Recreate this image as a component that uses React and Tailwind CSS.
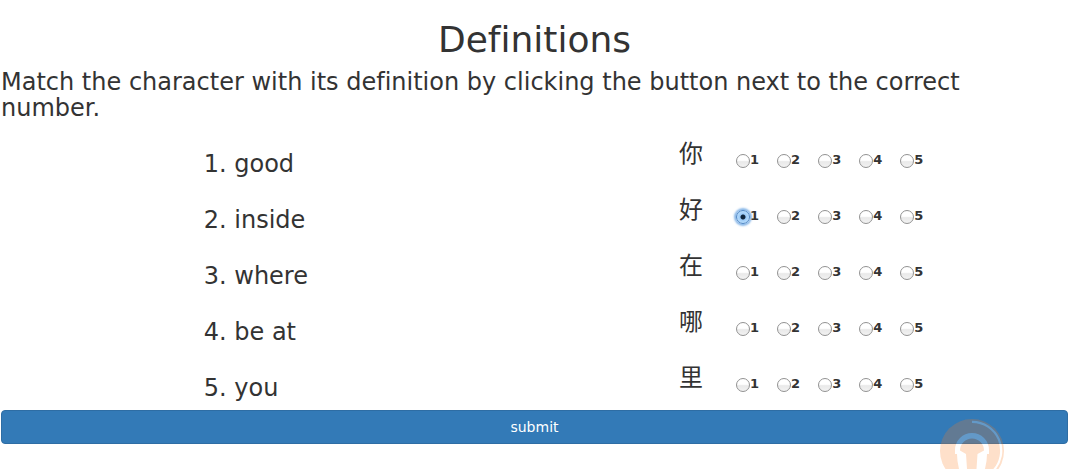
import { useState } from "react";

const rows = [
  { definition: "good", character: "你" },
  { definition: "inside", character: "好" },
  { definition: "where", character: "在" },
  { definition: "be at", character: "哪" },
  { definition: "you", character: "里" },
];

const choices = [1, 2, 3, 4, 5];

function Choice({ row, value, checked, onSelect }) {
  return (
    <label className="flex items-center text-[13px] leading-5 font-bold">
      <input
        type="radio"
        name={`character-${row}`}
        value={value}
        checked={checked}
        onChange={onSelect}
        className="mt-px size-3.5 shrink-0 appearance-none rounded-full border border-[#929292] bg-linear-to-b from-white from-45% via-[#e9e9e9] via-55% to-[#f4f4f4] bg-origin-border checked:border-[#4c86c6] checked:bg-[radial-gradient(circle,#10263d_0_2px,#9bcaf8_3px,#b9ddfb_6px)] checked:shadow-[0_0_2px_2px_#8ab8e8]"
      />
      {value}
    </label>
  );
}

function HeadphonesMark() {
  return (
    <div className="pointer-events-none fixed right-[73px] bottom-0 h-[50px] w-16 overflow-hidden">
      <svg viewBox="0 0 64 64" className="size-16 opacity-24" aria-hidden="true">
        <circle cx="32" cy="32" r="32" fill="#fb7d22" />
        <path d="M32 2.8A29 29 0 0 1 53 52" fill="none" stroke="#ffffff" strokeWidth="2.2" />
        <path
          d="M15 35V31A17 17 0 0 1 49 31V35H47Q47 42 45 50H36.5L37.5 35L44 31.5A12 12 0 0 0 20 31.5L26 35L27 50H19Q17 42 17 35Z"
          fill="#ffffff"
        />
      </svg>
    </div>
  );
}

export default function App() {
  const [answers, setAnswers] = useState({ 1: 1 });

  return (
    <main className="bg-white pt-[21px] pr-[9px] pl-px font-['DejaVu_Sans','Noto_Sans_CJK_SC',sans-serif] text-[#333333] [font-variant-ligatures:none]">
      <h1 className="text-center text-4xl leading-[38px]">Definitions</h1>
      <h2 className="mt-2.5 pr-4 text-2xl leading-[26px]">
        Match the character with its definition by clicking the button next to the correct number.
      </h2>
      <form onSubmit={(event) => event.preventDefault()}>
        <div className="mt-[9px]">
          {rows.map((row, index) => (
            <div key={row.character} className="grid h-14 grid-cols-[19fr_81fr]">
              <div className="col-start-2 flex items-start">
                <p className="w-[55%] pt-[21px] text-2xl leading-[26px]">
                  {index + 1}. {row.definition}
                </p>
                <fieldset className="flex items-start">
                  <legend className="float-left w-[57px] pt-[11px] text-2xl leading-[26px]">
                    {row.character}
                  </legend>
                  <div className="flex gap-[18px] pt-5">
                    {choices.map((value) => (
                      <Choice
                        key={value}
                        row={index}
                        value={value}
                        checked={answers[index] === value}
                        onSelect={() => setAnswers({ ...answers, [index]: value })}
                      />
                    ))}
                  </div>
                </fieldset>
              </div>
            </div>
          ))}
        </div>
        <button
          type="submit"
          className="block w-full rounded border border-[#2e6da4] bg-[#337ab7] py-1.5 text-sm leading-5 text-white"
        >
          submit
        </button>
      </form>
      <HeadphonesMark />
    </main>
  );
}
